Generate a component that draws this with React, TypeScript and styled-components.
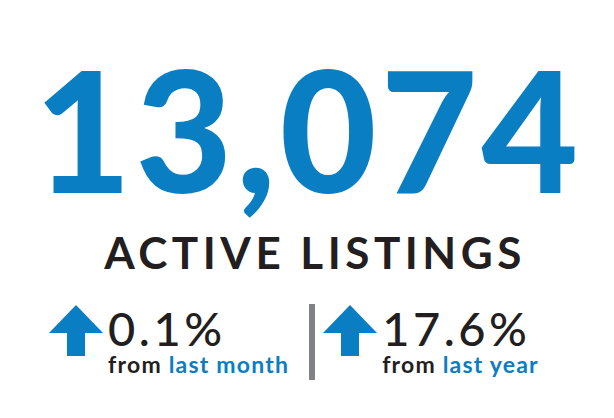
import styled, { createGlobalStyle } from 'styled-components';

const GlobalStyle = createGlobalStyle`
  html, body {
    margin: 0;
    padding: 0;
    background: #ffffff;
  }
  body {
    font-family: Lato, "Noto Sans", sans-serif;
  }
`;

const blue = '#0a7ec2';
const ink = '#231f20';

const Page = styled.div`
  width: 614px;
  height: 418px;
  display: flex;
  flex-direction: column;
  align-items: center;
  box-sizing: border-box;
  padding-top: 45px;
  overflow: hidden;
`;

const BigNumber = styled.div`
  font-family: Lato, sans-serif;
  font-weight: 900;
  font-size: 167px;
  line-height: 1;
  color: ${blue};
  letter-spacing: 4px;
  margin-left: 3px;
`;

const Title = styled.div`
  margin-top: 18px;
  font-family: Lato, sans-serif;
  font-weight: 700;
  font-size: 44px;
  line-height: 1;
  letter-spacing: 4.5px;
  color: ${ink};
  margin-left: 16px;
`;

const StatsRow = styled.div`
  margin-top: 31px;
  display: flex;
  align-items: flex-start;
  margin-left: -26px;
`;

const Stat = styled.div`
  display: flex;
  align-items: flex-start;
  gap: 5px;
`;

const StatText = styled.div`
  display: flex;
  flex-direction: column;
`;

const Value = styled.div`
  font-family: Lato, sans-serif;
  font-weight: 500;
  font-size: 47px;
  line-height: 46px;
  letter-spacing: 3.5px;
  color: ${ink};
`;

const Caption = styled.div`
  font-family: Lato, sans-serif;
  font-weight: 700;
  font-size: 23px;
  line-height: 26px;
  letter-spacing: 1.2px;
  color: ${ink};
`;

const Accent = styled.span`
  color: ${blue};
`;

const Divider = styled.div`
  width: 6px;
  height: 76px;
  margin: -1px 8px 0 20px;
  background: #808285;
`;

const UpArrow = () => (
  <svg width="54" height="51" viewBox="0 0 54 51">
    <polygon points="0,28 27,0 54,28 36,28 36,51 18,51 18,28" fill={blue} />
  </svg>
);

export default function App() {
  return (
    <>
      <GlobalStyle />
      <Page>
        <BigNumber>13,074</BigNumber>
        <Title>ACTIVE LISTINGS</Title>
        <StatsRow>
          <Stat>
            <UpArrow />
            <StatText>
              <Value>0.1%</Value>
              <Caption>
                from <Accent>last month</Accent>
              </Caption>
            </StatText>
          </Stat>
          <Divider />
          <Stat>
            <UpArrow />
            <StatText>
              <Value>17.6%</Value>
              <Caption>
                from <Accent>last year</Accent>
              </Caption>
            </StatText>
          </Stat>
        </StatsRow>
      </Page>
    </>
  );
}
